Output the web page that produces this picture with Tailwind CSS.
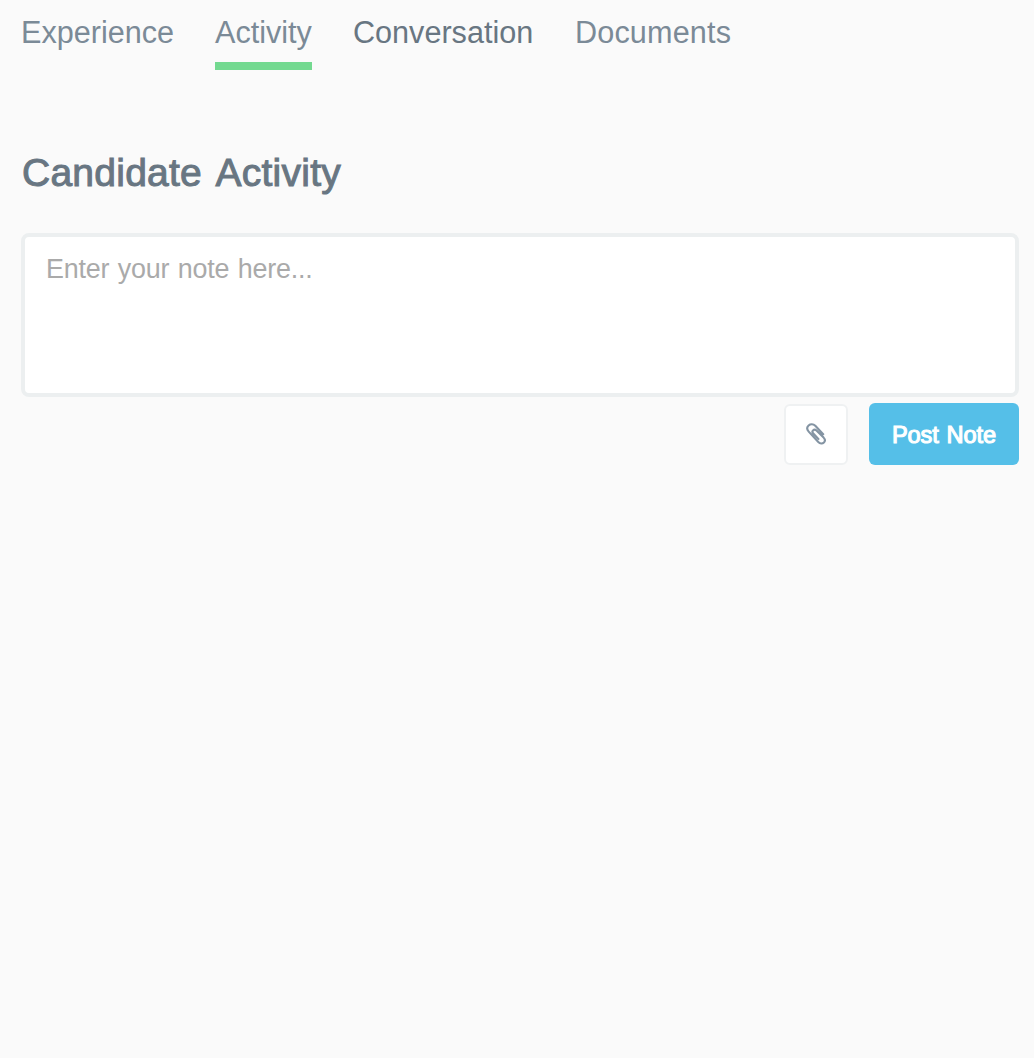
<!DOCTYPE html>
<html lang="en">
<head>
<meta charset="utf-8">
<title>Candidate Activity</title>
<script src="https://cdn.jsdelivr.net/npm/@tailwindcss/browser@4"></script>
</head>
<body class="min-h-screen bg-[#fafafa] pl-[21px] pr-[15px] font-['Liberation_Sans',Arial,sans-serif] text-[#687682]">
  <nav class="flex h-[70px] pt-[14px] text-[30.6px] leading-[36px] text-[#7b8a97]">
    <a class="mr-[42px] w-[152px] whitespace-nowrap">Experience</a>
    <a class="mr-[41px] w-[97px] whitespace-nowrap border-b-8 border-[#73d990]">Activity</a>
    <a class="mr-[41px] w-[181px] whitespace-nowrap text-[#687682]">Conversation</a>
    <a class="whitespace-nowrap tracking-[0.15px]">Documents</a>
  </nav>
  <main>
    <h1 class="mt-[80px] h-[83px] whitespace-nowrap pl-px text-[39px] leading-[46px] tracking-[0.25px] [word-spacing:4.5px] [-webkit-text-stroke:1px_#687682]">Candidate Activity</h1>
    <textarea class="block h-[164px] w-full resize-none rounded-[8px] border-4 border-[#eceff0] bg-white px-[21px] py-[16px] text-[26.9px] leading-[32px] tracking-[-0.2px] [word-spacing:1.2px] placeholder:text-[#aaaaaa] outline-none" placeholder="Enter your note here..."></textarea>
    <div class="mt-[6px] flex justify-end gap-[21px]">
      <button class="mt-px flex h-[61px] w-[64px] items-center justify-center rounded-[6px] border-2 border-[#eff1f2] bg-white" aria-label="Attach file">
        <svg class="mb-[2px] h-[22px] w-[20px]" viewBox="0 0 20 22" fill="none" stroke="#8494a3" stroke-width="2.1" stroke-linecap="round" stroke-linejoin="round">
          <path d="M17.200 11.200 9.300 2.800C7.300 .9 4.400 .9 2.600 2.500C.9 4.100 .9 6.600 2.700 8.600L12.300 19C14 20.700 16.400 20.900 17.900 19.500C19.300 18.100 19.100 16.200 17.600 14.600L10.500 7.500C9.300 6.400 7.900 6.500 7 7.400C6.100 8.300 6.300 9.500 7.300 10.500L12.400 15.900"/>
        </svg>
      </button>
      <button class="h-[62px] w-[150px] whitespace-nowrap rounded-[6px] bg-[#55bfe8] pt-[3px] text-[23.6px] tracking-[-0.1px] [word-spacing:1.4px] text-white [-webkit-text-stroke:1.1px_white]">Post Note</button>
    </div>
  </main>
</body>
</html>
